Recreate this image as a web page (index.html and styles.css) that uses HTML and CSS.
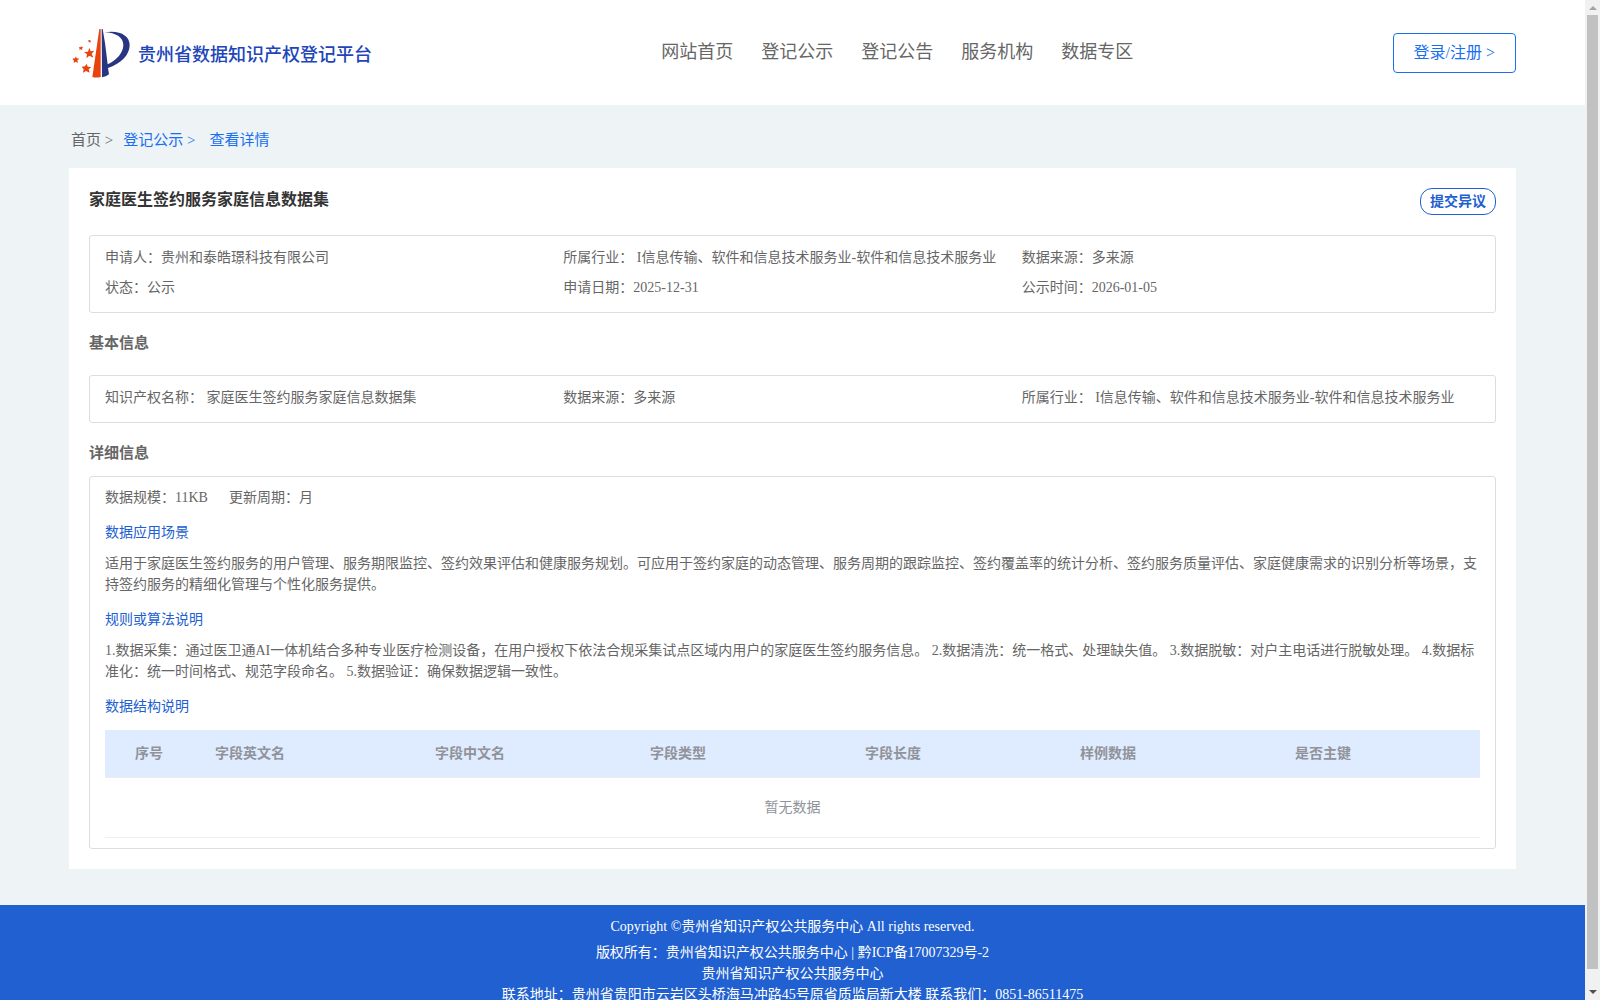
FILE: index.html
```
<!DOCTYPE html>
<html lang="zh-CN">
<head>
    <meta charset="UTF-8">
    <meta name="viewport" content="width=device-width, initial-scale=1.0">
    <title>贵州省数据知识产权登记平台</title>
    <link rel="stylesheet" href="styles.css">
</head>
<body>
    <div class="page">
        <header class="header">
            <a class="logo" href="#">
                <svg viewBox="36 39 174 150" width="58" height="50" aria-hidden="true">
                    <path fill="#e8420f" d="M118 42h4v144q-12 3-25 0z"/>
                    <path fill="#283583" d="M125 42h3l7 42 8 64c26-12 47-34 47-58 0-23-22-37-57-38 45-8 76 9 76 38 0 31-27 56-65 69l3 19q-9 7-21 9z"/>
                    <g fill="#e8420f">
                        <path d="M88 98l4 11 11-2-8 9 5 12-12-6-9 8 2-12-9-7 12-1z"/>
                        <path d="M80 146l3 9 11 1-8 7 3 10-11-5-9 5 2-10-6-8 10-1z"/>
                        <path d="M48 124l2 6 8 1-6 5 2 8-7-4-6 4 1-7-5-6 8-1z"/>
                        <path d="M64 93l1 4 5 0-4 4 1 4-5-2-4 2 1-4-3-4 5 0z"/>
                        <path d="M90 74l1 3 3 0-3 3 1 3-4-2-3 1 1-3-2-3 4 0z"/>
                    </g>
                </svg>
                <span>贵州省数据知识产权登记平台</span>
            </a>
            <nav class="nav">
                <a href="#">网站首页</a>
                <a href="#">登记公示</a>
                <a href="#">登记公告</a>
                <a href="#">服务机构</a>
                <a href="#">数据专区</a>
            </nav>
            <button class="login" type="button">登录/注册 &gt;</button>
        </header>

        <main class="main">
            <div class="crumbs">
                <a class="home" href="#">首页 &gt;</a>
                <a class="second" href="#">登记公示 &gt;</a>
                <a href="#">查看详情</a>
            </div>

            <div class="card">
                <div class="card-top">
                    <h1>家庭医生签约服务家庭信息数据集</h1>
                    <button class="objection" type="button">提交异议</button>
                </div>

                <div class="box info">
                    <p>申请人：贵州和泰皓璟科技有限公司</p>
                    <p>所属行业： I信息传输、软件和信息技术服务业-软件和信息技术服务业</p>
                    <p>数据来源：多来源</p>
                    <p>状态：公示</p>
                    <p>申请日期：2025-12-31</p>
                    <p>公示时间：2026-01-05</p>
                </div>

                <h2>基本信息</h2>
                <div class="box info">
                    <p>知识产权名称： 家庭医生签约服务家庭信息数据集</p>
                    <p>数据来源：多来源</p>
                    <p>所属行业： I信息传输、软件和信息技术服务业-软件和信息技术服务业</p>
                </div>

                <h2 class="tight">详细信息</h2>
                <div class="box detail">
                    <p class="scale"><span>数据规模：11KB</span><span>更新周期：月</span></p>
                    <h3>数据应用场景</h3>
                    <p>适用于家庭医生签约服务的用户管理、服务期限监控、签约效果评估和健康服务规划。可应用于签约家庭的动态管理、服务周期的跟踪监控、签约覆盖率的统计分析、签约服务质量评估、家庭健康需求的识别分析等场景，支持签约服务的精细化管理与个性化服务提供。</p>
                    <h3>规则或算法说明</h3>
                    <p>1.数据采集：通过医卫通AI一体机结合多种专业医疗检测设备，在用户授权下依法合规采集试点区域内用户的家庭医生签约服务信息。 2.数据清洗：统一格式、处理缺失值。 3.数据脱敏：对户主电话进行脱敏处理。 4.数据标准化：统一时间格式、规范字段命名。 5.数据验证：确保数据逻辑一致性。</p>
                    <h3>数据结构说明</h3>
                    <table>
                        <thead>
                            <tr>
                                <th class="num">序号</th>
                                <th class="en">字段英文名</th>
                                <th class="col">字段中文名</th>
                                <th class="col">字段类型</th>
                                <th class="col">字段长度</th>
                                <th class="col">样例数据</th>
                                <th>是否主键</th>
                            </tr>
                        </thead>
                        <tbody>
                            <tr>
                                <td colspan="7">暂无数据</td>
                            </tr>
                        </tbody>
                    </table>
                </div>
            </div>
        </main>

        <footer class="footer">
            <p class="copy">Copyright ©贵州省知识产权公共服务中心 All rights reserved.</p>
            <p>版权所有：贵州省知识产权公共服务中心 | 黔ICP备17007329号-2</p>
            <p>贵州省知识产权公共服务中心</p>
            <p>联系地址：贵州省贵阳市云岩区头桥海马冲路45号原省质监局新大楼 联系我们：0851-86511475</p>
        </footer>
    </div>

    <div class="scrollbar" aria-hidden="true">
        <span class="arrow up"></span>
        <span class="thumb"></span>
        <span class="arrow down"></span>
    </div>
</body>
</html>
```
FILE: styles.css
```
*{
    box-sizing: border-box;
}
body{
    margin: 0;
    display: flex;
    height: 100vh;
    font-family: "Liberation Serif", "Noto Sans CJK SC", serif;
    font-size: 14px;
    line-height: 21px;
    color: #666;
    background-color: #eef3f6;
}
h1, h2, h3, p{
    margin: 0;
}
a{
    text-decoration: none;
    color: inherit;
}
button{
    font-family: inherit;
    background-color: #fff;
    cursor: pointer;
}
.page{
    flex: 1;
    min-width: 0;
    overflow-y: auto;
    scrollbar-width: none;
}

/* header */
.header{
    display: flex;
    justify-content: space-between;
    align-items: center;
    height: 105px;
    padding: 0 69px;
    background-color: #fff;
}
.logo{
    display: flex;
    align-items: center;
    gap: 8px;
    padding: 0 30px 0 3px;
    font-size: 18px;
    font-weight: 500;
    color: #2145b8;
}
.logo span{
    padding-top: 5px;
}
.nav{
    display: flex;
    gap: 28px;
    font-size: 18px;
}
.login{
    height: 40px;
    padding: 0 20px 3px;
    border: 1px solid #1a6ff0;
    border-radius: 4px;
    font-size: 16px;
    color: #1a6ff0;
}

/* content */
.main{
    padding: 0 69px;
    margin-bottom: 36px;
}
.crumbs{
    display: flex;
    padding: 25px 2px 17px;
    font-size: 15px;
    color: #1a6ff0;
}
.crumbs .home{
    margin-right: 10px;
    color: #666;
}
.crumbs .second{
    margin-right: 14px;
}
.card{
    padding: 20px;
    background-color: #fff;
}
.card-top{
    display: flex;
    justify-content: space-between;
    align-items: flex-start;
    margin-bottom: 20px;
}
h1{
    font-size: 16px;
    line-height: 23px;
    color: #333;
}
.objection{
    height: 27px;
    padding: 0 9px 4px;
    border: 1px solid #2060d0;
    border-radius: 12px;
    font-size: 14px;
    font-weight: bold;
    color: #2060d0;
}
.box{
    border: 1px solid #ddd;
    border-radius: 3px;
}
.info{
    display: grid;
    grid-template-columns: repeat(3, 1fr);
    padding: 7px 15px 9px;
    line-height: 30px;
}
h2{
    padding: 20px 0 21px;
    font-size: 15px;
}
h2.tight{
    padding-bottom: 12px;
}
.detail{
    padding: 10px 15px;
}
.scale{
    display: flex;
    gap: 21px;
}
h3{
    margin: 14px 0 10px;
    font-size: 14px;
    font-weight: normal;
    color: #2060d0;
}
table{
    width: 100%;
    table-layout: fixed;
    border-collapse: separate;
    border-spacing: 0;
    margin-top: 13px;
    color: #909399;
}
th, td{
    padding: 0 10px;
    border-bottom: 1px solid #ebeef5;
}
th{
    height: 48px;
    text-align: left;
    background-color: #dfecff;
}
td{
    height: 60px;
    text-align: center;
}
.num{
    width: 100px;
    padding-left: 30px;
}
.en{
    width: 220px;
}
.col{
    width: 215px;
}

/* footer */
.footer{
    padding: 11px 0 20px;
    text-align: center;
    color: #fff;
    background-color: #2060d0;
}
.copy{
    margin-bottom: 5px;
}

/* scrollbar */
.scrollbar{
    display: flex;
    flex-direction: column;
    align-items: center;
    width: 15px;
    background-color: #f1f1f1;
}
.thumb{
    flex: 1;
    width: 11px;
    margin: 5px 0 21px;
    background-color: #c1c1c1;
}
.arrow{
    border: 4px solid transparent;
}
.up{
    margin-top: 6px;
    border-top: 0;
    border-bottom-color: #a3a3a3;
}
.down{
    margin-bottom: 6px;
    border-bottom: 0;
    border-top-color: #505050;
}
```
